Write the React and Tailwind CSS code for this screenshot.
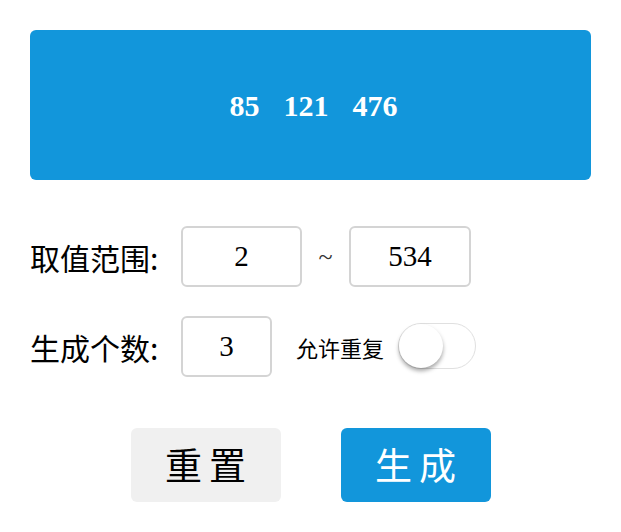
import { useState } from 'react';

const sans = '"Microsoft YaHei", "Noto Sans CJK SC", "Noto Sans", sans-serif';
const serif = '"Liberation Serif", "Noto Sans CJK SC", serif';

export default function App() {
  const [unique, setUnique] = useState(false);
  const nums = [85, 121, 476];

  return (
    <div className="w-[621px] p-[30px] bg-white" style={{ fontFamily: sans }}>
      {/* Result */}
      <div className="h-[150px] rounded-md bg-[#1296db] flex items-center justify-center gap-[24px] pl-[6px]">
        {nums.map(n => (
          <span key={n} className="text-white font-bold text-[30px]" style={{ fontFamily: serif }}>
            {n}
          </span>
        ))}
      </div>

      {/* Range */}
      <div className="mt-[46px] flex items-center h-[61px]">
        <span className="w-[151px] text-[30px] leading-none text-black">取值范围:</span>
        <input
          defaultValue="2"
          className="w-[121px] h-[61px] border-2 border-[#d4d4d4] rounded-md text-center text-[29px] outline-none"
          style={{ fontFamily: serif }}
        />
        <span className="w-[47px] text-center text-[26px] text-[#333]" style={{ fontFamily: serif }}>~</span>
        <input
          defaultValue="534"
          className="w-[122px] h-[61px] border-2 border-[#d4d4d4] rounded-md text-center text-[29px] outline-none"
          style={{ fontFamily: serif }}
        />
      </div>

      {/* Count */}
      <div className="mt-[29px] flex items-center h-[61px]">
        <span className="w-[151px] text-[30px] leading-none text-black">生成个数:</span>
        <input
          defaultValue="3"
          className="w-[91px] h-[61px] border-2 border-[#d4d4d4] rounded-md text-center text-[29px] outline-none"
          style={{ fontFamily: serif }}
        />
        <span className="ml-[24px] text-[22px] leading-none text-black">允许重复</span>
        <button
          onClick={() => setUnique(u => !u)}
          className={`ml-[14px] -mt-[2px] w-[78px] h-[46px] rounded-full border border-[#e0e0e0] flex items-center ${unique ? 'bg-[#1296db] justify-end' : 'bg-white justify-start'}`}
        >
          <span className="w-[44px] h-[44px] rounded-full bg-white shadow-[0_3px_4px_rgba(0,0,0,0.35)]" />
        </button>
      </div>

      {/* Actions */}
      <div className="mt-[51px] flex justify-center gap-[60px]">
        <button className="w-[150px] h-[74px] rounded-md bg-[#f0f0f0] text-black text-[37px] tracking-[7px] pl-[7px]">
          重置
        </button>
        <button className="w-[150px] h-[74px] rounded-md bg-[#1296db] text-white text-[37px] tracking-[7px] pl-[7px]">
          生成
        </button>
      </div>
    </div>
  );
}
